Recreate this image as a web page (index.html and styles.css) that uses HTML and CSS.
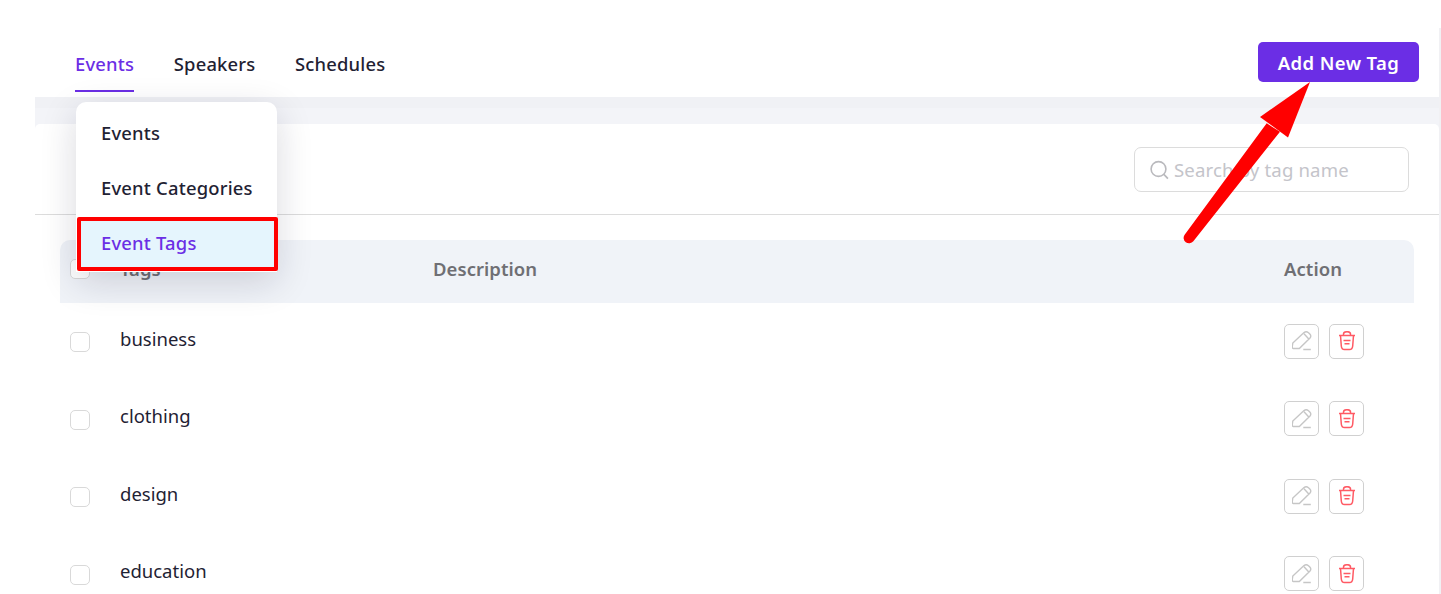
FILE: index.html
```html
<!DOCTYPE html>
<html lang="en">
<head>
<meta charset="utf-8">
<title>Event Tags</title>
<link rel="stylesheet" href="styles.css">
</head>
<body>
<div class="page">
  <header class="topbar">
    <nav class="tabs">
      <a class="tab active">Events</a>
      <a class="tab">Speakers</a>
      <a class="tab">Schedules</a>
    </nav>
    <button class="add-btn">Add New Tag</button>
  </header>
  <div class="band"></div>
  <section class="card">
    <div class="toolbar">
      <div class="search">
        <svg class="search-icon" viewBox="0 0 20 20" width="20" height="20"><circle cx="8.500" cy="9" r="7.400"/><path d="M13.900 14.400 17.900 18.600"/></svg>
        <span class="placeholder">Search by tag name</span>
      </div>
    </div>
    <div class="table">
      <div class="row head">
        <span class="check"></span>
        <span class="col-name">Tags</span>
        <span class="col-desc">Description</span>
        <span class="col-action">Action</span>
      </div>
      <div class="row body">
        <span class="check"></span><span class="col-name">business</span><span class="col-desc"></span>
        <span class="col-action actions">
          <span class="icon-btn"><svg viewBox="0 0 20 20" class="edit"><path d="M1.300 17.500C.4 17.500 .2 16.500 .3 15.500L.8 12 12 1.600C13.500 .5 15.300 .8 16.500 1.800L17.800 3C19 4.300 19 5.800 18 7L7.300 17.500zM12 2.800 16.800 8M11.300 18.500h7.500"/></svg></span>
          <span class="icon-btn"><svg viewBox="0.500 0 20 20" class="trash"><path d="M2.500 4.500h16M7 4.500V3c0-1.600 1.300-2.300 3.500-2.300S14 1.400 14 3v1.500M4 4.500l.8 10.500c.2 2.200 1.300 3.500 3.200 3.500h5c1.900 0 3-1.300 3.200-3.500l.8-10.500M7 9.500h7M8 12.800h5"/></svg></span>
        </span>
      </div>
      <div class="row body">
        <span class="check"></span><span class="col-name">clothing</span><span class="col-desc"></span>
        <span class="col-action actions">
          <span class="icon-btn"><svg viewBox="0 0 20 20" class="edit"><path d="M1.300 17.500C.4 17.500 .2 16.500 .3 15.500L.8 12 12 1.600C13.500 .5 15.300 .8 16.500 1.800L17.800 3C19 4.300 19 5.800 18 7L7.300 17.500zM12 2.800 16.800 8M11.300 18.500h7.500"/></svg></span>
          <span class="icon-btn"><svg viewBox="0.500 0 20 20" class="trash"><path d="M2.500 4.500h16M7 4.500V3c0-1.600 1.300-2.300 3.500-2.300S14 1.400 14 3v1.500M4 4.500l.8 10.500c.2 2.200 1.300 3.500 3.200 3.500h5c1.900 0 3-1.300 3.200-3.500l.8-10.500M7 9.500h7M8 12.800h5"/></svg></span>
        </span>
      </div>
      <div class="row body">
        <span class="check"></span><span class="col-name">design</span><span class="col-desc"></span>
        <span class="col-action actions">
          <span class="icon-btn"><svg viewBox="0 0 20 20" class="edit"><path d="M1.300 17.500C.4 17.500 .2 16.500 .3 15.500L.8 12 12 1.600C13.500 .5 15.300 .8 16.500 1.800L17.800 3C19 4.300 19 5.800 18 7L7.300 17.500zM12 2.800 16.800 8M11.300 18.500h7.500"/></svg></span>
          <span class="icon-btn"><svg viewBox="0.500 0 20 20" class="trash"><path d="M2.500 4.500h16M7 4.500V3c0-1.600 1.300-2.300 3.500-2.300S14 1.400 14 3v1.500M4 4.500l.8 10.500c.2 2.200 1.300 3.500 3.200 3.500h5c1.900 0 3-1.300 3.200-3.500l.8-10.500M7 9.500h7M8 12.800h5"/></svg></span>
        </span>
      </div>
      <div class="row body">
        <span class="check"></span><span class="col-name">education</span><span class="col-desc"></span>
        <span class="col-action actions">
          <span class="icon-btn"><svg viewBox="0 0 20 20" class="edit"><path d="M1.300 17.500C.4 17.500 .2 16.500 .3 15.500L.8 12 12 1.600C13.500 .5 15.300 .8 16.500 1.800L17.800 3C19 4.300 19 5.800 18 7L7.300 17.500zM12 2.800 16.800 8M11.300 18.500h7.500"/></svg></span>
          <span class="icon-btn"><svg viewBox="0.500 0 20 20" class="trash"><path d="M2.500 4.500h16M7 4.500V3c0-1.600 1.300-2.300 3.500-2.300S14 1.400 14 3v1.500M4 4.500l.8 10.500c.2 2.200 1.300 3.500 3.200 3.500h5c1.900 0 3-1.300 3.200-3.500l.8-10.500M7 9.500h7M8 12.800h5"/></svg></span>
        </span>
      </div>
    </div>
  </section>
</div>
<div class="rail"></div>
<div class="menu">
  <a class="menu-item">Events</a>
  <a class="menu-item">Event Categories</a>
  <a class="menu-item selected">Event Tags</a>
</div>
<svg class="arrow" viewBox="0 0 1441 594" width="1441" height="594"><path class="arrow-shape" d="M1266.700 123.300 1184.650 234.640A5.500 5.500 0 0 0 1193.350 241.360L1280 131.700z"/><path class="arrow-shape" d="M1310 82 1260 117 1288 137.500z"/></svg>
</body>
</html>
```
FILE: styles.css
```css
* { box-sizing: border-box; }
html, body { margin: 0; height: 100%; }
body {
  background: #fff;
  font-family: "Noto Sans", sans-serif;
  overflow: hidden;
  position: relative;
  width: 1441px;
  height: 594px;
  display: flex;
  padding-left: 35px;
}
.page {
  flex: none;
  width: 1404px;
  height: 594px;
  background: #f3f4f8;
  overflow: hidden;
}
.rail {
  flex: none;
  width: 2px;
  margin-top: 28px;
  background: #f1f1f4;
}
.topbar {
  height: 97px;
  background: #fff;
  display: flex;
  justify-content: space-between;
  padding: 42px 20px 0 40px;
}
.tabs { display: flex; gap: 39.5px; height: 55px; margin-top: -6px; }
.tab {
  height: 56px;
  padding-top: 15px;
  font-size: 18.4px;
  letter-spacing: .2px;
  line-height: 25px;
  font-weight: 500;
  color: #1f2233;
}
.tab.active { color: #6b2ee5; border-bottom: 2px solid #6b2ee5; }
.add-btn {
  width: 161px;
  height: 40px;
  border: 0;
  border-radius: 5px;
  background: #6b2ee5;
  color: #fff;
  font: 600 18.5px/24px "Noto Sans", sans-serif;
  letter-spacing: .4px;
  padding: 1px 0 0;
}
.band { height: 11px; background: #f0f1f5; margin-bottom: 16px; }
.card { background: #fff; border-radius: 5px; height: 480px; }
.toolbar {
  height: 91px;
  border-bottom: 1px solid #dcdcdc;
  display: flex;
  justify-content: flex-end;
  padding: 23px 30px 0 0;
}
.search {
  width: 275px;
  height: 45px;
  border: 1px solid #dcdcdc;
  border-radius: 7px;
  display: flex;
  align-items: center;
  gap: 4px;
  padding-left: 15px;
}
.search-icon { fill: none; stroke: #b9b9bd; stroke-width: 1.6; }
.placeholder { font-size: 18.6px; letter-spacing: .14px; color: #c4c4ca; white-space: nowrap; }
.table { padding: 25px 25px 0; }
.row { display: flex; }
.head {
  height: 62.500px;
  background: #f0f3f8;
  border-radius: 10px 10px 0 0;
  align-items: center;
  font-size: 18.5px;
  letter-spacing: .05px;
  font-weight: 600;
  color: #6f6f74;
}
.head > span:not(.check) { padding-bottom: 6px; }
.body { height: 77.5px; align-items: center; font-size: 18.5px; color: #1f2233; }
.check {
  width: 20px;
  height: 20px;
  margin: 2px 30px 0 10px;
  border: 1px solid #d9d9d9;
  border-radius: 5px;
  background: #fff;
  flex: none;
}
.body .col-name { padding-bottom: 6px; }
.head .check { margin-top: -4px; }
.col-name { width: 313px; }
.col-desc { flex: 1; }
.col-action { width: 130px; }
.actions { display: flex; gap: 10px; }
.icon-btn {
  width: 35px;
  height: 35px;
  border: 1px solid #d0d0d0;
  border-radius: 5px;
  display: flex;
  align-items: center;
  justify-content: center;
}
.edit { width: 20px; height: 20px; fill: none; stroke: #c6c6c6; stroke-width: 1.4; }
.trash { width: 20px; height: 20px; fill: none; stroke: #ff5a64; stroke-width: 1.5; }
.menu {
  position: absolute;
  left: 76px;
  top: 102px;
  width: 201px;
  height: 170px;
  background: #fff;
  border-radius: 10px 10px 0 0;
  box-shadow: 0 10px 36px rgba(20, 20, 50, .16);
  font-size: 18.4px;
  letter-spacing: .2px;
  font-weight: 500;
  color: #1f2233;
  display: flex;
  flex-direction: column;
}
.menu-item {
  height: 55px;
  padding: 18px 0 0 25px;
  line-height: 25px;
}
.menu-item.selected {
  height: 54px;
  margin: 5px 0 0 1px;
  width: 201px;
  padding: 9px 0 0 20px;
  background: #e5f5fd;
  color: #6b2ee5;
  border: 4px solid #ff0000;
  border-radius: 2px;
}
.arrow { position: absolute; left: 0; top: 0; pointer-events: none; }
.arrow-shape { fill: #ff0000; }
```
